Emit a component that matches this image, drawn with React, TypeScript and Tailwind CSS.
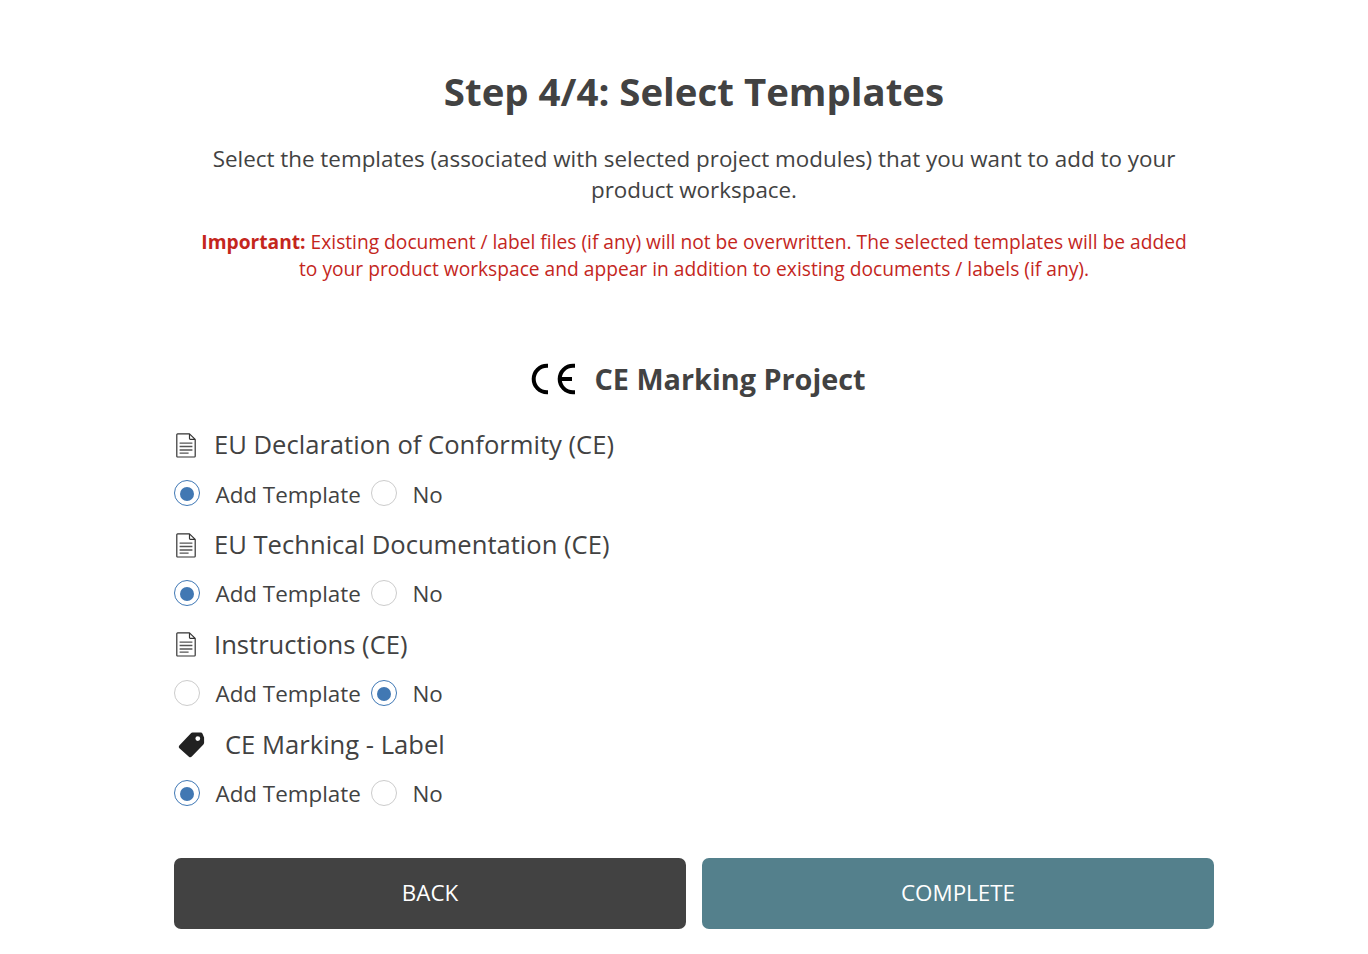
import { clsx } from "clsx";

type TemplateKind = "document" | "label";

interface Template {
  id: string;
  name: string;
  kind: TemplateKind;
  add: boolean;
}

const TEMPLATES: Template[] = [
  { id: "declaration", name: "EU Declaration of Conformity (CE)", kind: "document", add: true },
  { id: "technical", name: "EU Technical Documentation (CE)", kind: "document", add: true },
  { id: "instructions", name: "Instructions (CE)", kind: "document", add: false },
  { id: "label", name: "CE Marking - Label", kind: "label", add: true },
];

function DocumentIcon() {
  return (
    <svg width="20" height="25" viewBox="0 0 20 25" fill="none" stroke="#333" strokeLinejoin="round" className="ml-0.5 mr-[18px] shrink-0">
      <path strokeWidth="1.2" d="M1.6 .9H13.5L19.2 6.4V23.2Q19.2 24 18.4 24H1.6Q.8 24 .8 23.2V1.7Q.8 .9 1.6 .9Z M13.5 .9V5.6Q13.5 6.4 14.3 6.4H19.2" />
      <path strokeWidth="1.3" stroke="#555" d="M3.6 10.2H16.4 M3.6 13.5H16.4 M3.6 17H16.4 M3.6 20.2H12.6" />
    </svg>
  );
}

function TagIcon() {
  return (
    <svg width="27" height="26" viewBox="0 0 27 26" className="ml-1 mr-5 shrink-0">
      <path fill="#212121" fillRule="evenodd" d="M14.6 .5L22.8 .4Q24 .4 24.4 1.5L26.1 5.6V10.8Q26.1 11.7 25.4 12.4L13.8 24.6Q12.4 26 10.9 24.7L1.4 16.3Q0 15 1.3 13.6L12.7 1.4Q13.5 .5 14.6 .5ZM19.8 4.2A2.4 2.4 0 1 0 19.8 9A2.4 2.4 0 1 0 19.8 4.2Z" />
    </svg>
  );
}

function CeMark() {
  return (
    <svg width="46" height="32" viewBox="0 0 46 32" fill="none" stroke="#000" strokeWidth="4">
      <path d="M18 2.7H17A13.3 13.3 0 0 0 17 29.3H18 M45 2.7H43A13.3 13.3 0 0 0 43 29.3H45 M30 16H42" />
    </svg>
  );
}

export default function App() {
  return (
    <main className="h-[954px] overflow-hidden bg-white pl-[174px] font-['Open_Sans',sans-serif] text-[#424242]">
      <div className="w-[1040px] pt-16">
        <h1 className="text-center text-[38.4px] leading-[54px] font-bold">Step 4/4: Select Templates</h1>
        <p className="mt-[25px] px-5 text-center text-[22.4px] leading-[31px]">
          Select the templates (associated with selected project modules) that you want to add to your product workspace.
        </p>
        <p className="mt-[23px] px-5 text-center text-[19.2px] leading-[27px] text-[#c4261d]">
          <b>Important:</b> Existing document / label files (if any) will not be overwritten. The selected templates will be added to your product workspace and appear in addition to existing documents / labels (if any).
        </p>

        <div className="mt-[77px] flex h-10 items-center justify-center gap-[19px] pl-[7px]">
          <CeMark />
          <h2 className="text-[28.8px] leading-10 font-bold">CE Marking Project</h2>
        </div>

        <div className="mt-[26.3px] h-[398.7px]">
          {TEMPLATES.map((template) => (
            <TemplateRow key={template.id} template={template} />
          ))}
        </div>

        <div className="mt-[34px] grid grid-cols-2 gap-4">
          <button className="h-[71px] rounded-[7px] bg-[#424242] pb-0.5 text-[22.4px] text-white">BACK</button>
          <button className="h-[71px] rounded-[7px] bg-[#54808c] pb-0.5 text-[22.4px] text-white">COMPLETE</button>
        </div>
      </div>
    </main>
  );
}

function TemplateRow({ template }: { template: Template }) {
  return (
    <div className="h-[99.84px]">
      <div className="flex h-10 items-center text-[25.6px] leading-10">
        {template.kind === "document" ? <DocumentIcon /> : <TagIcon />}
        <span>{template.name}</span>
      </div>
      <div className="mt-[9.7px] flex h-[38px] items-center">
        <Radio name={template.id} label="Add Template" checked={template.add} className="w-[197px]" />
        <Radio name={template.id} label="No" checked={!template.add} />
      </div>
    </div>
  );
}

function Radio({ name, label, checked, className }: { name: string; label: string; checked: boolean; className?: string }) {
  return (
    <label className={clsx("flex items-center gap-[15.5px] text-[22.4px] leading-[38px]", className)}>
      <input type="radio" name={name} defaultChecked={checked} className="peer sr-only" />
      <span className="mb-[1.6px] flex size-[26px] shrink-0 items-center justify-center rounded-full border border-[#ccc] pt-0.5 peer-checked:border-[#3f78b5] peer-checked:[&>i]:bg-[#4178b3]">
        <i className="h-[14px] w-[14.5px] rounded-full" />
      </span>
      <span className="pt-[1.1px] whitespace-nowrap">{label}</span>
    </label>
  );
}
